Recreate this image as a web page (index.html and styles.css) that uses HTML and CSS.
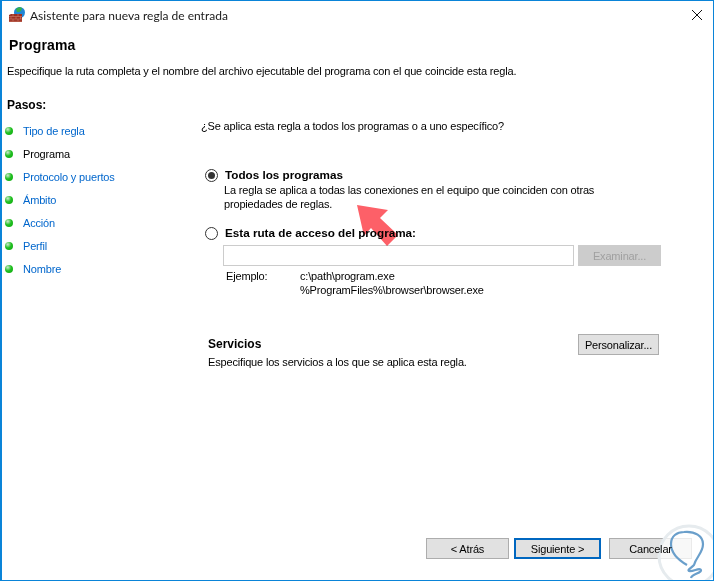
FILE: index.html
```html
<!DOCTYPE html>
<html lang="es">
<head>
<meta charset="utf-8">
<title>Asistente para nueva regla de entrada</title>
<link rel="stylesheet" href="styles.css">
</head>
<body>
<div class="window">
  <header class="titlebar">
    <svg class="app-icon" width="16" height="16" viewBox="0 0 16 16">
      <circle cx="10.500" cy="5.500" r="5.500" fill="#1f86d6"/>
      <path d="M7 2c2-2 5-2 6-1l-1 3-2 1-2 0z" fill="#35b04a"/>
      <path d="M0 8l2-1h11v8H0z" fill="#9c3022"/>
      <path d="M0 9.500h13M0 12h13M0 14.300h13M4 7v2.500M9 7v2.500M2 9.500v2.500M7 9.500v2.500M11.500 9.500v2.500M4 12v2.300M9 12v2.300" stroke="#cf7f6c" stroke-width=".6" fill="none"/>
    </svg>
    <span class="title">Asistente para nueva regla de entrada</span>
    <svg class="close" width="10" height="10" viewBox="0 0 10 10"><path d="M0 0l10 10M10 0l-10 10" stroke="#111" stroke-width="1" fill="none"/></svg>
  </header>
  <div class="head">
    <h1>Programa</h1>
    <p>Especifique la ruta completa y el nombre del archivo ejecutable del programa con el que coincide esta regla.</p>
  </div>
  <div class="body">
    <nav class="steps">
      <h2>Pasos:</h2>
      <ul>
        <li class="link"><i class="dot"></i>Tipo de regla</li>
        <li><i class="dot"></i>Programa</li>
        <li class="link"><i class="dot"></i>Protocolo y puertos</li>
        <li class="link"><i class="dot"></i>Ámbito</li>
        <li class="link"><i class="dot"></i>Acción</li>
        <li class="link"><i class="dot"></i>Perfil</li>
        <li class="link"><i class="dot"></i>Nombre</li>
      </ul>
    </nav>
    <main class="content">
      <p class="question">¿Se aplica esta regla a todos los programas o a uno específico?</p>
      <div class="option">
        <span class="radio checked"></span>
        <div class="opt-label">Todos los programas</div>
      </div>
      <p class="opt-desc">La regla se aplica a todas las conexiones en el equipo que coinciden con otras<br>propiedades de reglas.</p>
      <div class="option second">
        <span class="radio"></span>
        <div class="opt-label">Esta ruta de acceso del programa:</div>
      </div>
      <div class="path-row">
        <div class="input"></div>
        <div class="btn disabled">Examinar...</div>
      </div>
      <div class="example">
        <span class="ex-label">Ejemplo:</span>
        <span>c:\path\program.exe<br>%ProgramFiles%\browser\browser.exe</span>
      </div>
      <div class="services">
        <div>
          <div class="svc-title">Servicios</div>
          <div class="svc-desc">Especifique los servicios a los que se aplica esta regla.</div>
        </div>
        <div class="btn custom">Personalizar...</div>
      </div>
    </main>
  </div>
  <footer class="actions">
    <div class="btn wide">&lt; Atrás</div>
    <div class="btn wide primary">Siguiente &gt;</div>
    <div class="btn wide cancel"><span class="cancel-text">Cancelar</span></div>
  </footer>
  <svg class="arrow" width="50" height="50" viewBox="0 0 50 50">
    <path d="M2 2L33 7L25 15L43 32L32 43L16 25L9 33Z" fill="#fd6068"/>
  </svg>
  <svg class="logo" width="64" height="60" viewBox="0 0 64 60">
    <circle cx="39" cy="35" r="30" fill="#fff" fill-opacity=".75" stroke="#e6ebee" stroke-width="3"/>
    <path d="M37 44C30 40 21 33 21 23C21 15 27 11 34 11C45 10 53 15 53 23C53 32 46 36 44 44C41 47 37 49 39 50C43 51 50 46 51 49C52 52 42 53 41 57" fill="none" stroke="#6a9fcb" stroke-width="2.200"/>
  </svg>
</div>
</body>
</html>
```
FILE: styles.css
```css
* { box-sizing: border-box; }
html, body { margin: 0; padding: 0; }
body { width: 714px; height: 581px; overflow: hidden; font-family: "Liberation Sans", Arial, sans-serif; font-size: 11px; letter-spacing: -0.17px; color: #000; background: #fff; }
.window { position: relative; width: 714px; height: 581px; border: 1px solid #0a84d8; border-left-width: 2px; background: #fff; display: flex; flex-direction: column; overflow: hidden; }
.titlebar { height: 30px; display: flex; align-items: center; padding-left: 7px; padding-right: 11px; flex: none; }
.app-icon { flex: none; margin: -2px 5px 0 0; }
.title { flex: 1; font-family: Lato, "Liberation Sans", sans-serif; font-size: 12px; letter-spacing: 0; color: #1a1a1a; margin-top: -1px; }
.close { flex: none; margin-top: -2px; }
.head { height: 64px; flex: none; padding-left: 5px; }
h1 { font-size: 14px; letter-spacing: 0.15px; font-weight: bold; margin: 7px 0 0 2px; line-height: 15px; }
.head p { margin: 11px 0 0; line-height: 14px; }
.body { flex: 1; display: flex; min-height: 0; }
.steps { width: 196px; flex: none; padding-left: 5px; }
h2 { font-size: 12px; letter-spacing: 0; font-weight: bold; margin: 3px 0 0; line-height: 14px; }
.steps ul { list-style: none; margin: 11px 0 0; padding: 0; }
.steps li { height: 23px; line-height: 14px; display: flex; align-items: flex-start; padding-top: 1px; }
.steps li.link { color: #0066cc; }
.dot { width: 8px; height: 8px; border-radius: 50%; background: radial-gradient(circle at 35% 30%, #cfe8cf 0, #22c022 45%, #0aa80a 100%); margin: 3px 10px 0 -2px; flex: none; }
.content { flex: 1; padding-top: 24px; }
.question { margin: 0 0 0 3px; line-height: 14px; }
.option { display: flex; align-items: center; margin: 35px 0 0 7px; }
.option.second { margin-top: 15px; }
.radio { width: 13px; height: 13px; border: 1px solid #333; border-radius: 50%; background: #fff; flex: none; margin-right: 7px; position: relative; }
.radio.checked::after { content: ""; position: absolute; left: 2px; top: 2px; width: 7px; height: 7px; border-radius: 50%; background: #333; }
.opt-label { font-size: 11.7px; letter-spacing: 0; font-weight: bold; line-height: 14px; }
.opt-desc { margin: 1px 0 0 26px; line-height: 14px; width: 420px; }
.path-row { display: flex; margin: 5px 0 0 25px; }
.input { width: 351px; height: 21px; border: 1px solid #ccc; background: #fff; }
.btn { display: flex; align-items: center; justify-content: center; background: #e1e1e1; border: 1px solid #adadad; height: 21px; flex: none; }
.btn.disabled { width: 83px; margin-left: 4px; background: #ccc; border-color: #ccc; color: #a0a0a0; }
.example { display: flex; margin: 3px 0 0 28px; line-height: 14px; }
.ex-label { width: 74px; }
.services { display: flex; justify-content: space-between; align-items: flex-start; margin: 37px 54px 0 10px; }
.svc-title { font-size: 12px; letter-spacing: 0; font-weight: bold; line-height: 14px; margin-top: 3px; }
.svc-desc { line-height: 14px; margin-top: 4px; }
.btn.custom { width: 81px; }
.actions { flex: none; height: 42px; display: flex; justify-content: flex-end; padding-right: 21px; }
.btn.wide { width: 83px; }
.btn.wide.primary { width: 87px; margin-left: 5px; border: 2px solid #0067c0; }
.btn.cancel { margin-left: 8px; }
.cancel-text { position: relative; z-index: 2; }
.arrow { position: absolute; left: 353px; top: 202px; mix-blend-mode: multiply; }
.logo { position: absolute; left: 648px; top: 520px; }
```
